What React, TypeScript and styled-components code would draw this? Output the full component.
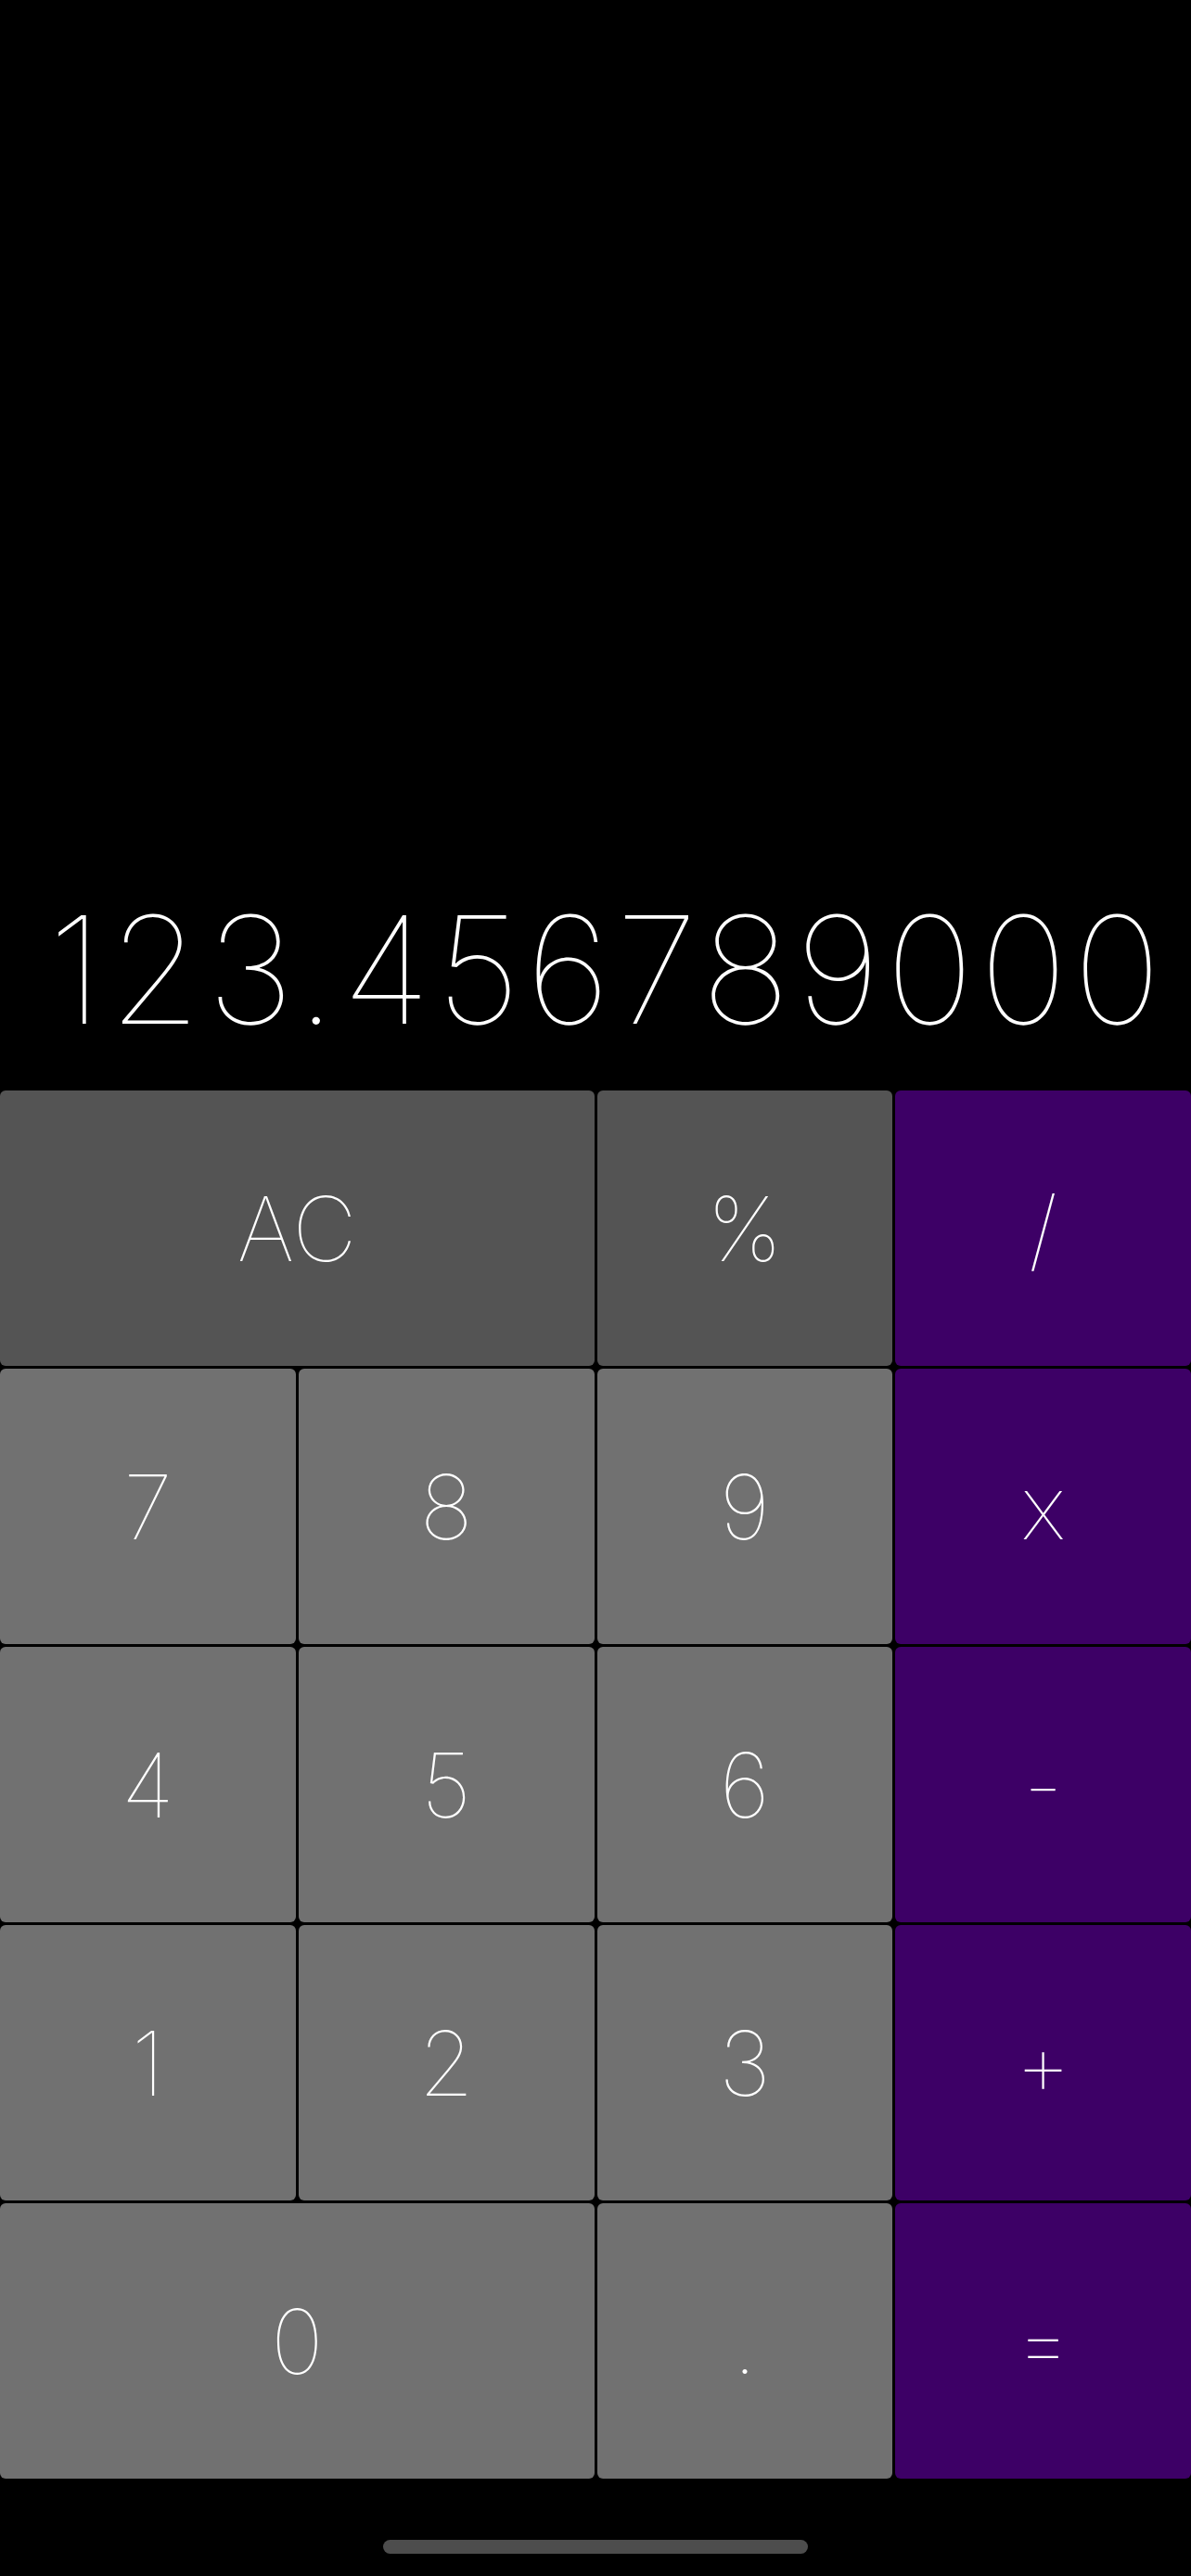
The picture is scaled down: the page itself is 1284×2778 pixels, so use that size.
import React from "react";
import styled, { createGlobalStyle } from "styled-components";

const GlobalStyle = createGlobalStyle`
  html, body {
    margin: 0;
    padding: 0;
    background: #000000;
  }
  * { box-sizing: border-box; }
`;

const Screen = styled.div`
  width: 1284px;
  height: 2778px;
  background: #000000;
  display: flex;
  flex-direction: column;
  font-family: Inter, "Noto Sans", sans-serif;
  color: #ffffff;
`;

const Display = styled.div`
  flex: 1;
  display: flex;
  align-items: flex-end;
  justify-content: flex-end;
  padding: 0 26px 50px 0;
`;

const Readout = styled.div`
  font-size: 161px;
  font-weight: 100;
  line-height: 1;
  letter-spacing: 6px;
  white-space: nowrap;
`;

const Keypad = styled.div`
  display: grid;
  grid-template-columns: repeat(4, 1fr);
  grid-auto-rows: 297px;
  gap: 3px;
`;

type Tone = "func" | "digit" | "op";

const toneColor: Record<Tone, string> = {
  func: "#545454",
  digit: "#717171",
  op: "#3d0066",
};

const Key = styled.button<{ $tone: Tone; $span?: number }>`
  grid-column: span ${(p) => p.$span ?? 1};
  border: none;
  margin: 0;
  padding: 0;
  border-radius: 6px;
  background: ${(p) => toneColor[p.$tone]};
  color: #ffffff;
  font-family: Inter, "Noto Sans", sans-serif;
  font-size: 96px;
  font-weight: 100;
  line-height: 1;
  display: flex;
  align-items: center;
  justify-content: center;
`;

const Footer = styled.div`
  height: 105px;
  display: flex;
  justify-content: center;
  padding-top: 66px;
`;

const HomeIndicator = styled.div`
  width: 458px;
  height: 15px;
  border-radius: 8px;
  background: #4d4d4d;
`;

const keys: { label: string; tone: Tone; span?: number }[] = [
  { label: "AC", tone: "func", span: 2 },
  { label: "%", tone: "func" },
  { label: "/", tone: "op" },
  { label: "7", tone: "digit" },
  { label: "8", tone: "digit" },
  { label: "9", tone: "digit" },
  { label: "x", tone: "op" },
  { label: "4", tone: "digit" },
  { label: "5", tone: "digit" },
  { label: "6", tone: "digit" },
  { label: "-", tone: "op" },
  { label: "1", tone: "digit" },
  { label: "2", tone: "digit" },
  { label: "3", tone: "digit" },
  { label: "+", tone: "op" },
  { label: "0", tone: "digit", span: 2 },
  { label: ".", tone: "digit" },
  { label: "=", tone: "op" },
];

export default function App() {
  return (
    <>
      <GlobalStyle />
      <Screen>
        <Display>
          <Readout>123.456789000</Readout>
        </Display>
        <Keypad>
          {keys.map((k) => (
            <Key key={k.label} $tone={k.tone} $span={k.span}>
              {k.label}
            </Key>
          ))}
        </Keypad>
        <Footer>
          <HomeIndicator />
        </Footer>
      </Screen>
    </>
  );
}
